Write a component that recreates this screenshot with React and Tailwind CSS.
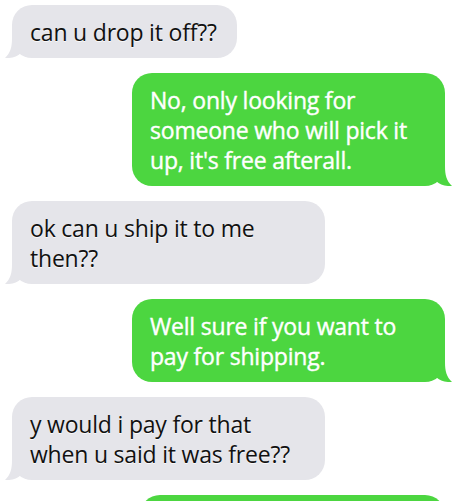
import React from 'react';

const messages = [
  { from: 'them', text: 'can u drop it off??' },
  { from: 'me', text: "No, only looking for someone who will pick it up, it's free afterall." },
  { from: 'them', text: 'ok can u ship it to me then??' },
  { from: 'me', text: 'Well sure if you want to pay for shipping.' },
  { from: 'them', text: 'y would i pay for that when u said it was free??' },
  { from: 'me', text: "That's how free works, you come get it.", fixed: true }
];

const Tail = ({ side, color }) => (
  <svg
    width="20"
    height="20"
    viewBox="0 0 20 20"
    className={
      side === 'left'
        ? 'absolute -left-[7px] bottom-0'
        : 'absolute -right-[7px] bottom-0 -scale-x-100'
    }
  >
    <path d="M20 0 L7 0 C7 9 5.5 15 0 20 C7 20.5 12 18.5 16 15 L20 15 Z" fill={color} />
  </svg>
);

const Bubble = ({ msg }) => {
  const mine = msg.from === 'me';
  return (
    <div className={`flex ${mine ? 'justify-end' : 'justify-start'}`}>
      <div
        className={`relative rounded-[20px] pl-[18px] pr-5 py-[11.5px] text-[23px] leading-[30px] tracking-[-0.2px] ${
          mine
            ? 'bg-[#4cd640] text-white font-medium [-webkit-text-stroke:0.4px_white]'
            : 'bg-[#e5e5ea] text-[#111] [text-shadow:0_1px_0_rgba(255,255,255,0.8)]'
        } ${msg.fixed ? 'w-[305px]' : 'max-w-[313px]'}`}
      >
        {msg.text}
        <Tail side={mine ? 'right' : 'left'} color={mine ? '#4cd640' : '#e5e5ea'} />
      </div>
    </div>
  );
};

export default function App() {
  return (
    <div
      className="w-[464px] h-[501px] overflow-hidden bg-white pl-3 pr-[19px] pt-[5px] flex flex-col gap-[15px]"
      style={{ fontFamily: '"Open Sans", sans-serif' }}
    >
      {messages.map((m, i) => (
        <Bubble key={i} msg={m} />
      ))}
    </div>
  );
}
